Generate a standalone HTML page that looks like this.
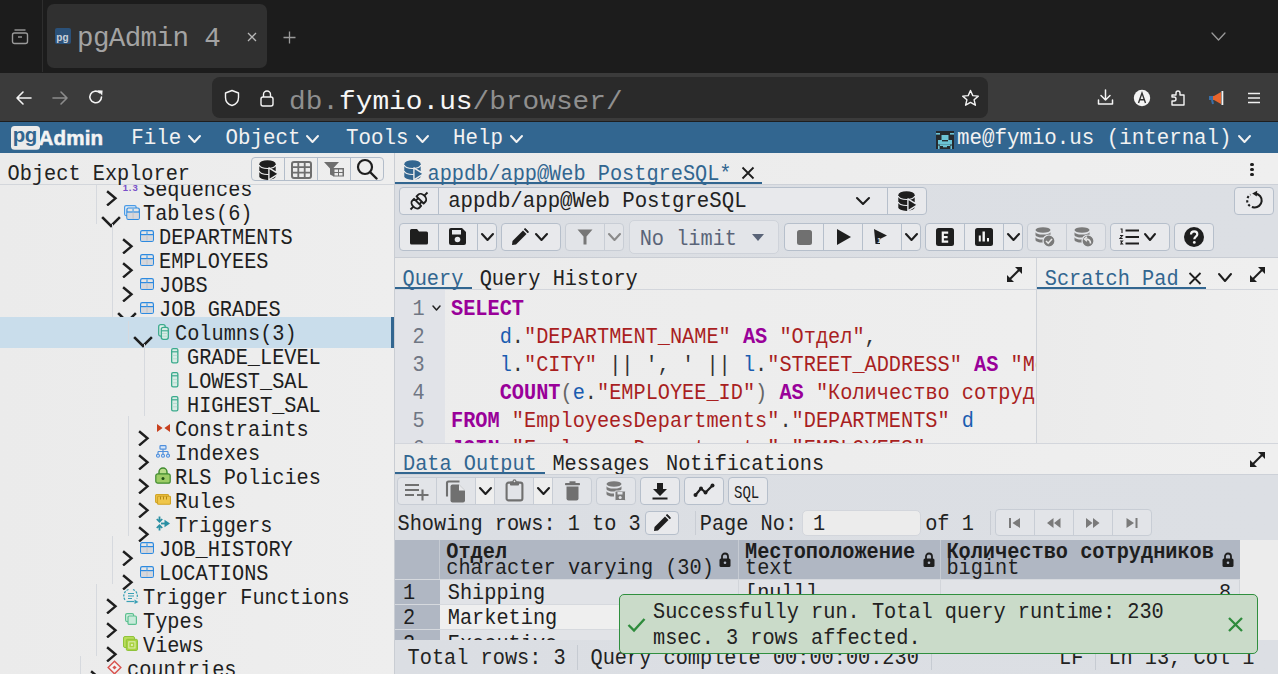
<!DOCTYPE html>
<html><head><meta charset="utf-8"><style>
html,body{margin:0;padding:0;width:1278px;height:674px;overflow:hidden;background:#ececec}
body{position:relative}
div{position:absolute}
.t{white-space:pre}
</style></head><body>
<div style="left:0px;top:0px;width:1278px;height:73px;background:#1c1c1c"></div>
<div style="left:42px;top:0px;width:1px;height:72px;background:#2e2e2e"></div>
<div style="left:47px;top:4px;width:220px;height:64px;background:#303030;border-radius:7px"></div>
<svg style="position:absolute;left:11px;top:27px;" width="18" height="18" viewBox="0 0 18 18"><rect x="1.5" y="6" width="15" height="10.5" rx="2" fill="none" stroke="#9a9a9a" stroke-width="1.4"/><path d="M3.5 3 H14.5" stroke="#9a9a9a" stroke-width="1.4"/><path d="M7 10 H11" stroke="#9a9a9a" stroke-width="1.4"/></svg>
<div style="left:55px;top:28px;width:16px;height:16px;background:#2b5179;border-radius:2px"></div>
<div class="t" style="left:56.30px;top:32.64px;font-size:10px;line-height:10px;color:#c9d2dc;font-weight:bold;font-family:'Liberation Sans', sans-serif;">pg</div>
<div class="t" style="left:77.00px;top:25.23px;font-size:27.5px;line-height:27.5px;color:#a3a3a3;font-family:'Liberation Mono', monospace;letter-spacing:-0.6px">pgAdmin 4</div>
<svg style="position:absolute;left:247px;top:31.5px;" width="10" height="10" viewBox="0 0 10 10"><path d="M1 1 L9 9 M9 1 L1 9" stroke="#b8b8b8" stroke-width="1.3"/></svg>
<svg style="position:absolute;left:283px;top:31px;" width="13" height="13" viewBox="0 0 13 13"><path d="M6.5 0.5 V12.5 M0.5 6.5 H12.5" stroke="#9a9a9a" stroke-width="1.3"/></svg>
<svg style="position:absolute;left:1209.5px;top:31.0px;" width="17" height="11" viewBox="0 0 17 11"><path d="M2 2 L8.5 9 L15 2" fill="none" stroke="#9a9a9a" stroke-width="1.3" stroke-linecap="round" stroke-linejoin="round"/></svg>
<div style="left:0px;top:73px;width:1278px;height:49px;background:#3b3b3b"></div>
<div style="left:0px;top:121px;width:1278px;height:1px;background:#1e1e1e"></div>
<svg style="position:absolute;left:15px;top:89px;" width="18" height="18" viewBox="0 0 18 18"><path d="M2 9 H16 M8 3 L2 9 L8 15" fill="none" stroke="#f4f4f4" stroke-width="1.6" stroke-linejoin="round" stroke-linecap="round"/></svg>
<svg style="position:absolute;left:51px;top:89px;" width="18" height="18" viewBox="0 0 18 18"><path d="M2 9 H16 M10 3 L16 9 L10 15" fill="none" stroke="#8c8c8c" stroke-width="1.6" stroke-linejoin="round" stroke-linecap="round"/></svg>
<svg style="position:absolute;left:87px;top:88px;" width="18" height="18" viewBox="0 0 18 18"><path d="M14.5 9 A5.8 5.8 0 1 1 12.6 4.6" fill="none" stroke="#f4f4f4" stroke-width="1.6" stroke-linecap="round"/><path d="M10.5 2.2 L15.6 2.4 L15.2 7.5 Z" fill="#f4f4f4"/></svg>
<div style="left:212px;top:77px;width:776px;height:41px;background:#2a2a2a;border-radius:8px"></div>
<svg style="position:absolute;left:223px;top:89px;" width="18" height="18" viewBox="0 0 18 18"><path d="M9 1.5 L15.5 4 V8.5 C15.5 12.5 12.5 15.5 9 16.5 C5.5 15.5 2.5 12.5 2.5 8.5 V4 Z" fill="none" stroke="#f4f4f4" stroke-width="1.4" stroke-linejoin="round"/></svg>
<svg style="position:absolute;left:259px;top:89px;" width="16" height="18" viewBox="0 0 16 18"><rect x="2" y="8" width="12" height="9" rx="2" fill="none" stroke="#f4f4f4" stroke-width="1.4"/><path d="M4.5 8 V5.5 A3.5 3.5 0 0 1 11.5 5.5 V8" fill="none" stroke="#f4f4f4" stroke-width="1.4"/></svg>
<div class="t" style="left:289.00px;top:87.80px;font-size:27.8px;line-height:27.8px;color:#f6f6f6;font-family:'Liberation Mono', monospace;transform:scaleY(0.9);transform-origin:0 21.30px;"><span style="color:#8f8f8f">db.</span>fymio.us<span style="color:#8f8f8f">/browser/</span></div>
<svg style="position:absolute;left:961px;top:89px;" width="19" height="18" viewBox="0 0 19 18"><path d="M9.5 1.5 L11.8 6.6 L17.3 7.1 L13.1 10.8 L14.4 16.2 L9.5 13.4 L4.6 16.2 L5.9 10.8 L1.7 7.1 L7.2 6.6 Z" fill="none" stroke="#f4f4f4" stroke-width="1.4" stroke-linejoin="round"/></svg>
<svg style="position:absolute;left:1097px;top:88px;" width="17" height="18" viewBox="0 0 17 18"><path d="M8.5 2 V12 M4 7.5 L8.5 12 L13 7.5 M1.5 12 V16 H15.5 V12" fill="none" stroke="#f4f4f4" stroke-width="1.5" stroke-linejoin="round" stroke-linecap="round"/></svg>
<svg style="position:absolute;left:1133px;top:89px;" width="18" height="18" viewBox="0 0 18 18"><circle cx="9" cy="9" r="8.2" fill="#f4f4f4"/><path d="M5.5 14 L9 4 L12.5 14 M6.6 10.8 H11.4" fill="none" stroke="#333" stroke-width="1.4"/></svg>
<svg style="position:absolute;left:1170px;top:89px;" width="17" height="18" viewBox="0 0 17 18"><path d="M2 6 H6 V4 A2 2 0 0 1 10 4 V6 H14 V16 H2 V12 H4 A2 2 0 0 0 4 8 H2 Z" fill="none" stroke="#f4f4f4" stroke-width="1.4" stroke-linejoin="round"/></svg>
<svg style="position:absolute;left:1207px;top:89px;" width="18" height="18" viewBox="0 0 18 18"><path d="M3 7 H7 L14 3 V15 L7 11 H3 Z" fill="#e8642c"/><rect x="14.5" y="2" width="1.8" height="14" fill="#f4f4f4"/><rect x="2" y="7" width="4" height="4" fill="#3a6ea5"/><path d="M5 11 L6 15" stroke="#3a6ea5" stroke-width="2"/></svg>
<svg style="position:absolute;left:1247px;top:92px;" width="14" height="12" viewBox="0 0 14 12"><path d="M1 1.5 H13 M1 6 H13 M1 10.5 H13" stroke="#f0f0f0" stroke-width="1.4"/></svg>
<div style="left:0px;top:122px;width:1278px;height:31px;background:#326690"></div>
<svg style="position:absolute;left:10px;top:125px;" width="100" height="27" viewBox="0 0 100 27"><rect x="1" y="1" width="29" height="23.7" rx="3.5" fill="#ebebeb"/><text x="2.8" y="16.6" font-family="Liberation Sans" font-weight="bold" font-size="20.4" fill="#326690" letter-spacing="-0.4">pg</text><text x="28.5" y="19.5" font-family="Liberation Sans" font-weight="bold" font-size="20.6" fill="#f4f4f4" stroke="#f4f4f4" stroke-width="0.5" letter-spacing="0.15">Admin</text></svg>
<div class="t" style="left:131.20px;top:129.37px;font-size:20.8px;line-height:20.8px;color:#f2f2f2;font-family:'Liberation Mono', monospace;transform:scaleY(1.02);transform-origin:0 15.93px;">File</div>
<svg style="position:absolute;left:186.5px;top:134.0px;" width="15" height="10" viewBox="0 0 15 10"><path d="M2 2 L7.5 8 L13 2" fill="none" stroke="#f2f2f2" stroke-width="2" stroke-linecap="round" stroke-linejoin="round"/></svg>
<div class="t" style="left:225.60px;top:129.37px;font-size:20.8px;line-height:20.8px;color:#f2f2f2;font-family:'Liberation Mono', monospace;transform:scaleY(1.02);transform-origin:0 15.93px;">Object</div>
<svg style="position:absolute;left:304.5px;top:134.0px;" width="15" height="10" viewBox="0 0 15 10"><path d="M2 2 L7.5 8 L13 2" fill="none" stroke="#f2f2f2" stroke-width="2" stroke-linecap="round" stroke-linejoin="round"/></svg>
<div class="t" style="left:346.00px;top:129.37px;font-size:20.8px;line-height:20.8px;color:#f2f2f2;font-family:'Liberation Mono', monospace;transform:scaleY(1.02);transform-origin:0 15.93px;">Tools</div>
<svg style="position:absolute;left:414.5px;top:134.0px;" width="15" height="10" viewBox="0 0 15 10"><path d="M2 2 L7.5 8 L13 2" fill="none" stroke="#f2f2f2" stroke-width="2" stroke-linecap="round" stroke-linejoin="round"/></svg>
<div class="t" style="left:453.00px;top:129.37px;font-size:20.8px;line-height:20.8px;color:#f2f2f2;font-family:'Liberation Mono', monospace;transform:scaleY(1.02);transform-origin:0 15.93px;">Help</div>
<svg style="position:absolute;left:509.0px;top:134.0px;" width="15" height="10" viewBox="0 0 15 10"><path d="M2 2 L7.5 8 L13 2" fill="none" stroke="#f2f2f2" stroke-width="2" stroke-linecap="round" stroke-linejoin="round"/></svg>
<svg style="position:absolute;left:936px;top:131px;" width="18" height="18" viewBox="0 0 18 18"><rect width="18" height="18" fill="#262a2e"/><rect x="0" y="2" width="4" height="1.6" fill="#6cc3d5"/><rect x="14" y="2" width="4" height="1.6" fill="#6cc3d5"/><rect x="5.5" y="4" width="7" height="5.5" fill="#6cc3d5"/><rect x="2" y="9" width="14" height="4.5" fill="#6cc3d5"/><rect x="6" y="9" width="6" height="1.4" fill="#262a2e"/><rect x="4" y="13.5" width="10" height="1.5" fill="#6cc3d5"/><rect x="7" y="15" width="4" height="1.3" fill="#6cc3d5"/><rect x="2" y="14.5" width="1.6" height="3.5" fill="#6cc3d5"/><rect x="14.4" y="14.5" width="1.6" height="3.5" fill="#6cc3d5"/></svg>
<div class="t" style="left:957.00px;top:129.37px;font-size:20.8px;line-height:20.8px;color:#f2f2f2;font-family:'Liberation Mono', monospace;transform:scaleY(1.02);transform-origin:0 15.93px;">me@fymio.us (internal)</div>
<svg style="position:absolute;left:1237.0px;top:134.0px;" width="15" height="10" viewBox="0 0 15 10"><path d="M2 2 L7.5 8 L13 2" fill="none" stroke="#f2f2f2" stroke-width="2" stroke-linecap="round" stroke-linejoin="round"/></svg>
<div style="left:0px;top:153px;width:394px;height:521px;background:linear-gradient(90deg,#ebebeb,#eeeeee)"></div>
<div style="left:0px;top:184px;width:394px;height:1px;background:#d3d6db"></div>
<div class="t" style="left:7.60px;top:164.96px;font-size:20.28px;line-height:20.28px;color:#222;font-family:'Liberation Mono', monospace;transform:scaleY(1.05);transform-origin:0 15.54px;">Object Explorer</div>
<div style="left:251px;top:157px;width:133px;height:24px;border:1px solid #b3bdca;border-radius:4px;box-sizing:border-box"></div>
<div style="left:284px;top:157px;width:1px;height:24px;background:#b3bdca"></div>
<div style="left:317px;top:157px;width:1px;height:24px;background:#b3bdca"></div>
<div style="left:350px;top:157px;width:1px;height:24px;background:#b3bdca"></div>
<svg style="position:absolute;left:258.5px;top:159.5px;" width="20" height="21" viewBox="-0.3 -0.3 20 21"><ellipse cx="8.2" cy="3.6" rx="8.2" ry="3.6" fill="#1e1e1e"/><path d="M0 4 V16 A8.2 3.6 0 0 0 16.4 16 V4 Z" fill="#1e1e1e"/><path d="M0 4.6 A8.2 3.6 0 0 0 16.4 4.6 M0 10.6 A8.2 3.6 0 0 0 16.4 10.6" fill="none" stroke="#ececec" stroke-width="1.2"/><path d="M9.6 7.6 L19.2 13.6 L9.6 19.6 Z" fill="#1e1e1e" stroke="#ececec" stroke-width="1.4" stroke-linejoin="round"/></svg>
<svg style="position:absolute;left:290.5px;top:160.5px;" width="21" height="18" viewBox="0 0 21 18"><rect x="1" y="1" width="19" height="16" rx="2" fill="#ececec" stroke="#6e6e6e" stroke-width="2"/><path d="M1 6.2 H20 M1 11.6 H20 M7.3 1 V17 M13.7 1 V17" stroke="#6e6e6e" stroke-width="1.8"/></svg>
<svg style="position:absolute;left:323px;top:161px;" width="22" height="16" viewBox="0 0 22 16"><path d="M1 1 H16 L10 7.5 V15 L7 13.5 V7.5 Z" fill="#6e6e6e"/><rect x="10" y="7" width="11" height="8.5" fill="#6e6e6e"/><rect x="11.5" y="8.5" width="3.5" height="2.5" fill="#ececec"/><rect x="16" y="8.5" width="3.5" height="2.5" fill="#ececec"/><rect x="11.5" y="12" width="3.5" height="2.5" fill="#ececec"/><rect x="16" y="12" width="3.5" height="2.5" fill="#ececec"/></svg>
<svg style="position:absolute;left:356px;top:158px;" width="22" height="22" viewBox="0 0 22 22"><circle cx="9" cy="9" r="7" fill="none" stroke="#1e1e1e" stroke-width="2.2"/><path d="M14 14 L20.5 20.5" stroke="#1e1e1e" stroke-width="2.4" stroke-linecap="round"/></svg>
<div style="left:0;top:185px;width:394px;height:489px;overflow:hidden">
<div style="left:96px;top:-9px;width:1px;height:24px;background:#d6d9de"></div>
<div class="t" style="left:122.70px;top:-1.98px;font-size:9.5px;line-height:9.5px;color:#7a4fc8;font-weight:bold;font-family:'Liberation Sans', sans-serif;letter-spacing:0.9px">1.3</div>
<div class="t" style="left:143.00px;top:-4.04px;font-size:20.28px;line-height:20.28px;color:#1e1e1e;font-family:'Liberation Mono', monospace;transform:scaleY(1.05);transform-origin:0 15.54px;">Sequences</div>
<svg style="position:absolute;left:106px;top:4.5px;" width="11.5" height="16.7" viewBox="0 0 11.5 16.7"><path d="M2 2 L9.5 8.35 L2 14.7" fill="none" stroke="#1e1e1e" stroke-width="2.4" stroke-linecap="square" stroke-linejoin="miter"/></svg>
<div style="left:96px;top:15px;width:1px;height:24px;background:#d6d9de"></div>
<svg style="position:absolute;left:123.5px;top:19.5px;" width="16" height="15" viewBox="0 0 16 15"><rect x="0.6" y="0.6" width="11.5" height="10" rx="1.5" fill="#e6eef6" stroke="#4a9be6" stroke-width="1.2"/><rect x="2.9" y="3" width="12.4" height="11.4" rx="1.4" fill="#e6e6e6" stroke="#2d8ae0" stroke-width="1.2"/><rect x="3.5" y="7.4" width="11.2" height="6.4" fill="#d6d7db"/><path d="M2.9 7 H15.3" stroke="#2d8ae0" stroke-width="1.2"/><path d="M9.1 3.6 V6.6" stroke="#6aaee8" stroke-width="1.5"/><path d="M9.1 7.6 V13.8" stroke="#c4c6cc" stroke-width="1.2"/></svg>
<div class="t" style="left:143.00px;top:19.96px;font-size:20.28px;line-height:20.28px;color:#1e1e1e;font-family:'Liberation Mono', monospace;transform:scaleY(1.05);transform-origin:0 15.54px;">Tables(6)</div>
<svg style="position:absolute;left:101px;top:30.5px;" width="20" height="12.0" viewBox="0 0 20 12.0"><path d="M2 2 L10.0 10.0 L18 2" fill="none" stroke="#1e1e1e" stroke-width="2.5" stroke-linecap="square" stroke-linejoin="miter"/></svg>
<div style="left:112px;top:39px;width:1px;height:24px;background:#d6d9de"></div>
<svg style="position:absolute;left:140px;top:44.5px;" width="14" height="12" viewBox="0 0 14 12"><rect x="0.6" y="0.6" width="12.8" height="10.8" rx="1.6" fill="#e6e6e6" stroke="#2d8ae0" stroke-width="1.2"/><rect x="1.2" y="5" width="11.6" height="5.8" fill="#d6d7db"/><path d="M0.6 4.6 H13.4" stroke="#2d8ae0" stroke-width="1.2"/><path d="M7 1.2 V4.2" stroke="#6aaee8" stroke-width="1.6"/><path d="M7 5.2 V10.8" stroke="#c4c6cc" stroke-width="1.2"/></svg>
<div class="t" style="left:159.00px;top:43.96px;font-size:20.28px;line-height:20.28px;color:#1e1e1e;font-family:'Liberation Mono', monospace;transform:scaleY(1.05);transform-origin:0 15.54px;">DEPARTMENTS</div>
<svg style="position:absolute;left:122px;top:52.5px;" width="11.5" height="16.700000000000003" viewBox="0 0 11.5 16.700000000000003"><path d="M2 2 L9.5 8.350000000000001 L2 14.700000000000003" fill="none" stroke="#1e1e1e" stroke-width="2.4" stroke-linecap="square" stroke-linejoin="miter"/></svg>
<div style="left:112px;top:63px;width:1px;height:24px;background:#d6d9de"></div>
<svg style="position:absolute;left:140px;top:68.5px;" width="14" height="12" viewBox="0 0 14 12"><rect x="0.6" y="0.6" width="12.8" height="10.8" rx="1.6" fill="#e6e6e6" stroke="#2d8ae0" stroke-width="1.2"/><rect x="1.2" y="5" width="11.6" height="5.8" fill="#d6d7db"/><path d="M0.6 4.6 H13.4" stroke="#2d8ae0" stroke-width="1.2"/><path d="M7 1.2 V4.2" stroke="#6aaee8" stroke-width="1.6"/><path d="M7 5.2 V10.8" stroke="#c4c6cc" stroke-width="1.2"/></svg>
<div class="t" style="left:159.00px;top:67.96px;font-size:20.28px;line-height:20.28px;color:#1e1e1e;font-family:'Liberation Mono', monospace;transform:scaleY(1.05);transform-origin:0 15.54px;">EMPLOYEES</div>
<svg style="position:absolute;left:122px;top:76.5px;" width="11.5" height="16.700000000000003" viewBox="0 0 11.5 16.700000000000003"><path d="M2 2 L9.5 8.350000000000001 L2 14.700000000000003" fill="none" stroke="#1e1e1e" stroke-width="2.4" stroke-linecap="square" stroke-linejoin="miter"/></svg>
<div style="left:112px;top:87px;width:1px;height:24px;background:#d6d9de"></div>
<svg style="position:absolute;left:140px;top:92.5px;" width="14" height="12" viewBox="0 0 14 12"><rect x="0.6" y="0.6" width="12.8" height="10.8" rx="1.6" fill="#e6e6e6" stroke="#2d8ae0" stroke-width="1.2"/><rect x="1.2" y="5" width="11.6" height="5.8" fill="#d6d7db"/><path d="M0.6 4.6 H13.4" stroke="#2d8ae0" stroke-width="1.2"/><path d="M7 1.2 V4.2" stroke="#6aaee8" stroke-width="1.6"/><path d="M7 5.2 V10.8" stroke="#c4c6cc" stroke-width="1.2"/></svg>
<div class="t" style="left:159.00px;top:91.96px;font-size:20.28px;line-height:20.28px;color:#1e1e1e;font-family:'Liberation Mono', monospace;transform:scaleY(1.05);transform-origin:0 15.54px;">JOBS</div>
<svg style="position:absolute;left:122px;top:100.5px;" width="11.5" height="16.700000000000003" viewBox="0 0 11.5 16.700000000000003"><path d="M2 2 L9.5 8.350000000000001 L2 14.700000000000003" fill="none" stroke="#1e1e1e" stroke-width="2.4" stroke-linecap="square" stroke-linejoin="miter"/></svg>
<div style="left:112px;top:111px;width:1px;height:24px;background:#d6d9de"></div>
<svg style="position:absolute;left:140px;top:116.5px;" width="14" height="12" viewBox="0 0 14 12"><rect x="0.6" y="0.6" width="12.8" height="10.8" rx="1.6" fill="#e6e6e6" stroke="#2d8ae0" stroke-width="1.2"/><rect x="1.2" y="5" width="11.6" height="5.8" fill="#d6d7db"/><path d="M0.6 4.6 H13.4" stroke="#2d8ae0" stroke-width="1.2"/><path d="M7 1.2 V4.2" stroke="#6aaee8" stroke-width="1.6"/><path d="M7 5.2 V10.8" stroke="#c4c6cc" stroke-width="1.2"/></svg>
<div class="t" style="left:159.00px;top:115.96px;font-size:20.28px;line-height:20.28px;color:#1e1e1e;font-family:'Liberation Mono', monospace;transform:scaleY(1.05);transform-origin:0 15.54px;">JOB_GRADES</div>
<svg style="position:absolute;left:117px;top:126.5px;" width="20" height="12.0" viewBox="0 0 20 12.0"><path d="M2 2 L10.0 10.0 L18 2" fill="none" stroke="#1e1e1e" stroke-width="2.5" stroke-linecap="square" stroke-linejoin="miter"/></svg>
<div style="left:0px;top:132px;width:394px;height:31px;background:#c9ddeb"></div>
<div style="left:391px;top:132px;width:3px;height:31px;background:#326690"></div>
<div style="left:128px;top:136px;width:1px;height:22.5px;background:#d6d9de"></div>
<svg style="position:absolute;left:157.5px;top:138.5px;" width="11" height="16" viewBox="0 0 11 16"><rect x="0.7" y="0.7" width="6.5" height="11.5" rx="2" fill="#e3f0ec" stroke="#3aaa8c" stroke-width="1.3"/><rect x="3.3" y="3.3" width="7" height="12" rx="2" fill="#d8ebe5" stroke="#3aaa8c" stroke-width="1.3"/><path d="M3.3 6.8 H10.3" stroke="#3aaa8c" stroke-width="1.1"/><path d="M4 9.5 H9.6 M4 12.2 H9.6" stroke="#b5dccf" stroke-width="1"/></svg>
<div class="t" style="left:175.00px;top:139.96px;font-size:20.28px;line-height:20.28px;color:#1e1e1e;font-family:'Liberation Mono', monospace;transform:scaleY(1.05);transform-origin:0 15.54px;">Columns(3)</div>
<svg style="position:absolute;left:133px;top:150.5px;" width="20" height="12.0" viewBox="0 0 20 12.0"><path d="M2 2 L10.0 10.0 L18 2" fill="none" stroke="#1e1e1e" stroke-width="2.5" stroke-linecap="square" stroke-linejoin="miter"/></svg>
<div style="left:144px;top:159px;width:1px;height:24px;background:#d6d9de"></div>
<svg style="position:absolute;left:171.4px;top:162.8px;" width="8" height="16" viewBox="0 0 8 16"><rect x="0.65" y="0.65" width="6.2" height="14.2" rx="1.4" fill="#d9ece6" stroke="#3aaa8c" stroke-width="1.3"/><path d="M0.7 3.8 H6.8" stroke="#3aaa8c" stroke-width="1.2"/><path d="M1.4 7.4 H6.2 M1.4 10.8 H6.2" stroke="#b5dccf" stroke-width="1"/></svg>
<div class="t" style="left:187.00px;top:163.96px;font-size:20.28px;line-height:20.28px;color:#1e1e1e;font-family:'Liberation Mono', monospace;transform:scaleY(1.05);transform-origin:0 15.54px;">GRADE_LEVEL</div>
<div style="left:144px;top:183px;width:1px;height:24px;background:#d6d9de"></div>
<svg style="position:absolute;left:171.4px;top:186.8px;" width="8" height="16" viewBox="0 0 8 16"><rect x="0.65" y="0.65" width="6.2" height="14.2" rx="1.4" fill="#d9ece6" stroke="#3aaa8c" stroke-width="1.3"/><path d="M0.7 3.8 H6.8" stroke="#3aaa8c" stroke-width="1.2"/><path d="M1.4 7.4 H6.2 M1.4 10.8 H6.2" stroke="#b5dccf" stroke-width="1"/></svg>
<div class="t" style="left:187.00px;top:187.96px;font-size:20.28px;line-height:20.28px;color:#1e1e1e;font-family:'Liberation Mono', monospace;transform:scaleY(1.05);transform-origin:0 15.54px;">LOWEST_SAL</div>
<div style="left:144px;top:207px;width:1px;height:24px;background:#d6d9de"></div>
<svg style="position:absolute;left:171.4px;top:210.8px;" width="8" height="16" viewBox="0 0 8 16"><rect x="0.65" y="0.65" width="6.2" height="14.2" rx="1.4" fill="#d9ece6" stroke="#3aaa8c" stroke-width="1.3"/><path d="M0.7 3.8 H6.8" stroke="#3aaa8c" stroke-width="1.2"/><path d="M1.4 7.4 H6.2 M1.4 10.8 H6.2" stroke="#b5dccf" stroke-width="1"/></svg>
<div class="t" style="left:187.00px;top:211.96px;font-size:20.28px;line-height:20.28px;color:#1e1e1e;font-family:'Liberation Mono', monospace;transform:scaleY(1.05);transform-origin:0 15.54px;">HIGHEST_SAL</div>
<div style="left:128px;top:231px;width:1px;height:24px;background:#d6d9de"></div>
<svg style="position:absolute;left:156.5px;top:238.7px;" width="13" height="8" viewBox="0 0 13 8"><path d="M0 0 L5.6 4 L0 8 Z M13 0 L7.4 4 L13 8 Z" fill="#c8401e"/></svg>
<div class="t" style="left:175.00px;top:235.96px;font-size:20.28px;line-height:20.28px;color:#1e1e1e;font-family:'Liberation Mono', monospace;transform:scaleY(1.05);transform-origin:0 15.54px;">Constraints</div>
<svg style="position:absolute;left:138px;top:244.5px;" width="11.5" height="16.69999999999999" viewBox="0 0 11.5 16.69999999999999"><path d="M2 2 L9.5 8.349999999999994 L2 14.699999999999989" fill="none" stroke="#1e1e1e" stroke-width="2.4" stroke-linecap="square" stroke-linejoin="miter"/></svg>
<div style="left:128px;top:255px;width:1px;height:24px;background:#d6d9de"></div>
<svg style="position:absolute;left:156px;top:260px;" width="14" height="13" viewBox="0 0 14 13"><rect x="4" y="0.6" width="6" height="3.6" rx="0.8" fill="#dce9f8" stroke="#4f8fdc" stroke-width="1.2"/><path d="M7 4.2 V6.5 M2 6.5 H12 M2 6.5 V9 M7 6.5 V9 M12 6.5 V9" stroke="#4f8fdc" stroke-width="1.2" fill="none"/><circle cx="2" cy="10.7" r="1.5" fill="#dce9f8" stroke="#4f8fdc" stroke-width="1.1"/><circle cx="7" cy="10.7" r="1.5" fill="#dce9f8" stroke="#4f8fdc" stroke-width="1.1"/><circle cx="12" cy="10.7" r="1.5" fill="#dce9f8" stroke="#4f8fdc" stroke-width="1.1"/></svg>
<div class="t" style="left:175.00px;top:259.96px;font-size:20.28px;line-height:20.28px;color:#1e1e1e;font-family:'Liberation Mono', monospace;transform:scaleY(1.05);transform-origin:0 15.54px;">Indexes</div>
<svg style="position:absolute;left:138px;top:268.5px;" width="11.5" height="16.69999999999999" viewBox="0 0 11.5 16.69999999999999"><path d="M2 2 L9.5 8.349999999999994 L2 14.699999999999989" fill="none" stroke="#1e1e1e" stroke-width="2.4" stroke-linecap="square" stroke-linejoin="miter"/></svg>
<div style="left:128px;top:279px;width:1px;height:24px;background:#d6d9de"></div>
<svg style="position:absolute;left:155px;top:282.2px;" width="16" height="17" viewBox="0 0 16 17"><path d="M4 7 V5 A4 4 0 0 1 12 5 V7" fill="#b9dd8a" stroke="#3f8a2e" stroke-width="1.4"/><rect x="0.8" y="6.8" width="14.4" height="9.4" rx="2" fill="#9ccc65" stroke="#3f8a2e" stroke-width="1.2"/><circle cx="8" cy="11.5" r="1.5" fill="#1f4f14"/></svg>
<div class="t" style="left:175.00px;top:283.96px;font-size:20.28px;line-height:20.28px;color:#1e1e1e;font-family:'Liberation Mono', monospace;transform:scaleY(1.05);transform-origin:0 15.54px;">RLS Policies</div>
<svg style="position:absolute;left:138px;top:292.5px;" width="11.5" height="16.69999999999999" viewBox="0 0 11.5 16.69999999999999"><path d="M2 2 L9.5 8.349999999999994 L2 14.699999999999989" fill="none" stroke="#1e1e1e" stroke-width="2.4" stroke-linecap="square" stroke-linejoin="miter"/></svg>
<div style="left:128px;top:303px;width:1px;height:24px;background:#d6d9de"></div>
<svg style="position:absolute;left:155px;top:309px;" width="16" height="11" viewBox="0 0 16 11"><rect x="0.6" y="0.6" width="13" height="8" rx="1" fill="#efc64a" stroke="#d1a425" stroke-width="1.1"/><rect x="2.5" y="2.3" width="13" height="8" rx="1" fill="#efc64a" stroke="#d1a425" stroke-width="1.1"/><path d="M5.5 2.5 V5.5 M8.5 2.5 V5.5 M11.5 2.5 V5.5" stroke="#b38712" stroke-width="1"/></svg>
<div class="t" style="left:175.00px;top:307.96px;font-size:20.28px;line-height:20.28px;color:#1e1e1e;font-family:'Liberation Mono', monospace;transform:scaleY(1.05);transform-origin:0 15.54px;">Rules</div>
<svg style="position:absolute;left:138px;top:316.5px;" width="11.5" height="16.69999999999999" viewBox="0 0 11.5 16.69999999999999"><path d="M2 2 L9.5 8.349999999999994 L2 14.699999999999989" fill="none" stroke="#1e1e1e" stroke-width="2.4" stroke-linecap="square" stroke-linejoin="miter"/></svg>
<div style="left:128px;top:327px;width:1px;height:24px;background:#d6d9de"></div>
<svg style="position:absolute;left:155px;top:331.3px;" width="16" height="15" viewBox="0 0 16 15"><path d="M4.5 0.5 V5.5 M1.8 3 L4.5 5.8 L7.2 3" fill="none" stroke="#2a8fa3" stroke-width="1.8"/><path d="M4.5 14.5 V9.5 M1.8 12 L4.5 9.2 L7.2 12" fill="none" stroke="#2a8fa3" stroke-width="1.8"/><path d="M6 7.5 H10" stroke="#2a8fa3" stroke-width="1.8"/><path d="M9.5 3.8 L15 7.5 L9.5 11.2 Z" fill="#2a8fa3"/></svg>
<div class="t" style="left:175.00px;top:331.96px;font-size:20.28px;line-height:20.28px;color:#1e1e1e;font-family:'Liberation Mono', monospace;transform:scaleY(1.05);transform-origin:0 15.54px;">Triggers</div>
<svg style="position:absolute;left:138px;top:340.5px;" width="11.5" height="16.69999999999999" viewBox="0 0 11.5 16.69999999999999"><path d="M2 2 L9.5 8.349999999999994 L2 14.699999999999989" fill="none" stroke="#1e1e1e" stroke-width="2.4" stroke-linecap="square" stroke-linejoin="miter"/></svg>
<div style="left:112px;top:351px;width:1px;height:24px;background:#d6d9de"></div>
<svg style="position:absolute;left:140px;top:356.5px;" width="14" height="12" viewBox="0 0 14 12"><rect x="0.6" y="0.6" width="12.8" height="10.8" rx="1.6" fill="#e6e6e6" stroke="#2d8ae0" stroke-width="1.2"/><rect x="1.2" y="5" width="11.6" height="5.8" fill="#d6d7db"/><path d="M0.6 4.6 H13.4" stroke="#2d8ae0" stroke-width="1.2"/><path d="M7 1.2 V4.2" stroke="#6aaee8" stroke-width="1.6"/><path d="M7 5.2 V10.8" stroke="#c4c6cc" stroke-width="1.2"/></svg>
<div class="t" style="left:159.00px;top:355.96px;font-size:20.28px;line-height:20.28px;color:#1e1e1e;font-family:'Liberation Mono', monospace;transform:scaleY(1.05);transform-origin:0 15.54px;">JOB_HISTORY</div>
<svg style="position:absolute;left:122px;top:364.5px;" width="11.5" height="16.69999999999999" viewBox="0 0 11.5 16.69999999999999"><path d="M2 2 L9.5 8.349999999999994 L2 14.699999999999989" fill="none" stroke="#1e1e1e" stroke-width="2.4" stroke-linecap="square" stroke-linejoin="miter"/></svg>
<div style="left:112px;top:375px;width:1px;height:24px;background:#d6d9de"></div>
<svg style="position:absolute;left:140px;top:380.5px;" width="14" height="12" viewBox="0 0 14 12"><rect x="0.6" y="0.6" width="12.8" height="10.8" rx="1.6" fill="#e6e6e6" stroke="#2d8ae0" stroke-width="1.2"/><rect x="1.2" y="5" width="11.6" height="5.8" fill="#d6d7db"/><path d="M0.6 4.6 H13.4" stroke="#2d8ae0" stroke-width="1.2"/><path d="M7 1.2 V4.2" stroke="#6aaee8" stroke-width="1.6"/><path d="M7 5.2 V10.8" stroke="#c4c6cc" stroke-width="1.2"/></svg>
<div class="t" style="left:159.00px;top:379.96px;font-size:20.28px;line-height:20.28px;color:#1e1e1e;font-family:'Liberation Mono', monospace;transform:scaleY(1.05);transform-origin:0 15.54px;">LOCATIONS</div>
<svg style="position:absolute;left:122px;top:388.5px;" width="11.5" height="16.69999999999999" viewBox="0 0 11.5 16.69999999999999"><path d="M2 2 L9.5 8.349999999999994 L2 14.699999999999989" fill="none" stroke="#1e1e1e" stroke-width="2.4" stroke-linecap="square" stroke-linejoin="miter"/></svg>
<div style="left:96px;top:399px;width:1px;height:24px;background:#d6d9de"></div>
<svg style="position:absolute;left:123px;top:402.5px;" width="16" height="16" viewBox="0 0 16 16"><path d="M5.5 1.5 A6.8 6.8 0 0 0 2.5 12.5" fill="none" stroke="#3aa0b5" stroke-width="1.3" stroke-dasharray="2.2 1.2"/><path d="M10 1.5 A6.8 6.8 0 0 1 13.8 10.5" fill="none" stroke="#3aa0b5" stroke-width="1.3" stroke-dasharray="2.2 1.2"/><path d="M5 5.5 H11 M5 8 H11 M5 10.5 H9" stroke="#3aa0b5" stroke-width="1.2"/><path d="M3.5 13.5 H11" stroke="#3aa0b5" stroke-width="1.2"/><path d="M11.5 11.5 L15.5 14 L11.5 16Z" fill="#3aa0b5"/></svg>
<div class="t" style="left:143.00px;top:403.96px;font-size:20.28px;line-height:20.28px;color:#1e1e1e;font-family:'Liberation Mono', monospace;transform:scaleY(1.05);transform-origin:0 15.54px;">Trigger Functions</div>
<svg style="position:absolute;left:106px;top:412.5px;" width="11.5" height="16.69999999999999" viewBox="0 0 11.5 16.69999999999999"><path d="M2 2 L9.5 8.349999999999994 L2 14.699999999999989" fill="none" stroke="#1e1e1e" stroke-width="2.4" stroke-linecap="square" stroke-linejoin="miter"/></svg>
<div style="left:96px;top:423px;width:1px;height:24px;background:#d6d9de"></div>
<svg style="position:absolute;left:124.5px;top:428px;" width="12" height="12" viewBox="0 0 12 12"><rect x="0.6" y="0.6" width="8" height="8" rx="1.5" fill="#d7efe2" stroke="#5cc090" stroke-width="1.2"/><rect x="3" y="3" width="8.4" height="8.4" rx="1.2" fill="#c8eada" stroke="#5cc090" stroke-width="1.2"/></svg>
<div class="t" style="left:143.00px;top:427.96px;font-size:20.28px;line-height:20.28px;color:#1e1e1e;font-family:'Liberation Mono', monospace;transform:scaleY(1.05);transform-origin:0 15.54px;">Types</div>
<svg style="position:absolute;left:106px;top:436.5px;" width="11.5" height="16.69999999999999" viewBox="0 0 11.5 16.69999999999999"><path d="M2 2 L9.5 8.349999999999994 L2 14.699999999999989" fill="none" stroke="#1e1e1e" stroke-width="2.4" stroke-linecap="square" stroke-linejoin="miter"/></svg>
<div style="left:96px;top:447px;width:1px;height:24px;background:#d6d9de"></div>
<svg style="position:absolute;left:123px;top:451px;" width="15" height="15" viewBox="0 0 15 15"><rect x="0.5" y="0.5" width="11" height="11" rx="1.5" fill="#b9dd5a" stroke="#8fc33a" stroke-width="1"/><rect x="3.3" y="3.3" width="11.2" height="11.2" rx="1.3" fill="#a9d23e" stroke="#8fc33a" stroke-width="1"/><rect x="5.8" y="5.8" width="6.2" height="6.2" fill="none" stroke="#e0f0b8" stroke-width="1"/><rect x="7.9" y="7.9" width="2" height="2" fill="#e0f0b8"/></svg>
<div class="t" style="left:143.00px;top:451.96px;font-size:20.28px;line-height:20.28px;color:#1e1e1e;font-family:'Liberation Mono', monospace;transform:scaleY(1.05);transform-origin:0 15.54px;">Views</div>
<svg style="position:absolute;left:106px;top:460.5px;" width="11.5" height="16.69999999999999" viewBox="0 0 11.5 16.69999999999999"><path d="M2 2 L9.5 8.349999999999994 L2 14.699999999999989" fill="none" stroke="#1e1e1e" stroke-width="2.4" stroke-linecap="square" stroke-linejoin="miter"/></svg>
<div style="left:80px;top:471px;width:1px;height:24px;background:#d6d9de"></div>
<svg style="position:absolute;left:107px;top:474.5px;" width="15" height="15" viewBox="0 0 15 15"><rect x="3" y="3" width="9" height="9" transform="rotate(45 7.5 7.5)" fill="#f4f4f4" stroke="#d9534f" stroke-width="1.4"/><rect x="6" y="6" width="3" height="3" transform="rotate(45 7.5 7.5)" fill="#d9534f"/></svg>
<div class="t" style="left:127.00px;top:475.96px;font-size:20.28px;line-height:20.28px;color:#1e1e1e;font-family:'Liberation Mono', monospace;transform:scaleY(1.05);transform-origin:0 15.54px;">countries</div>
<svg style="position:absolute;left:90px;top:484.5px;" width="11.5" height="16.69999999999999" viewBox="0 0 11.5 16.69999999999999"><path d="M2 2 L9.5 8.349999999999994 L2 14.699999999999989" fill="none" stroke="#1e1e1e" stroke-width="2.4" stroke-linecap="square" stroke-linejoin="miter"/></svg>
</div>
<div style="left:394px;top:153px;width:1px;height:521px;background:#c9cdd3"></div>
<div style="left:395px;top:153px;width:883px;height:31px;background:linear-gradient(90deg,#ebebeb,#efefef)"></div>
<div style="left:395px;top:184px;width:883px;height:1px;background:#cdd1d8"></div>
<svg style="position:absolute;left:403.5px;top:160px;" width="20" height="21" viewBox="-0.3 -0.3 20 21"><ellipse cx="8.2" cy="3.6" rx="8.2" ry="3.6" fill="#326690"/><path d="M0 4 V16 A8.2 3.6 0 0 0 16.4 16 V4 Z" fill="#326690"/><path d="M0 4.6 A8.2 3.6 0 0 0 16.4 4.6 M0 10.6 A8.2 3.6 0 0 0 16.4 10.6" fill="none" stroke="#ececec" stroke-width="1.2"/><path d="M9.6 7.6 L19.2 13.6 L9.6 19.6 Z" fill="#326690" stroke="#ececec" stroke-width="1.4" stroke-linejoin="round"/></svg>
<div class="t" style="left:427.50px;top:164.96px;font-size:20.28px;line-height:20.28px;color:#326690;font-family:'Liberation Mono', monospace;transform:scaleY(1.05);transform-origin:0 15.54px;">appdb/app@Web PostgreSQL*</div>
<svg style="position:absolute;left:741px;top:166px;" width="14" height="14" viewBox="0 0 14 14"><path d="M1.5 1.5 L12.5 12.5 M12.5 1.5 L1.5 12.5" stroke="#1e1e1e" stroke-width="1.8"/></svg>
<div style="left:395px;top:182px;width:367px;height:2px;background:#326690"></div>
<div style="left:1250px;top:162.75px;width:3.5px;height:3.5px;background:#1e1e1e;border-radius:50%"></div>
<div style="left:1250px;top:167.75px;width:3.5px;height:3.5px;background:#1e1e1e;border-radius:50%"></div>
<div style="left:1250px;top:172.75px;width:3.5px;height:3.5px;background:#1e1e1e;border-radius:50%"></div>
<div style="left:395px;top:185px;width:883px;height:73px;background:linear-gradient(90deg,#dbdee3,#dcdfe4)"></div>
<div style="left:395px;top:257px;width:883px;height:1px;background:#c9cdd4"></div>
<div style="left:399px;top:187px;width:528px;height:28px;background:#e8e9ec;border:1px solid #b6bfcb;border-radius:4px;box-sizing:border-box"></div>
<div style="left:438px;top:187px;width:1px;height:28px;background:#b6bfcb"></div>
<div style="left:887px;top:187px;width:1px;height:28px;background:#b6bfcb"></div>
<svg style="position:absolute;left:408px;top:190px;" width="22" height="22" viewBox="0 0 22 22"><g transform="rotate(-45 11 11)" fill="none" stroke="#1e1e1e" stroke-width="1.9" stroke-linejoin="round"><path d="M-1 11 H3.5"/><path d="M9 6 H6.5 A3.5 5 0 0 0 6.5 16 H9 Z"/><path d="M9 8.5 H12.5 M9 13.5 H12.5"/><path d="M12.5 6 H15 A3.5 5 0 0 1 15 16 H12.5 Z"/><path d="M18.5 11 H23"/></g><path d="M9 5 L7 3" stroke="#1e1e1e" stroke-width="0"/></svg>
<div class="t" style="left:448.20px;top:192.43px;font-size:20.72px;line-height:20.72px;color:#222;font-family:'Liberation Mono', monospace;transform:scaleY(1.03);transform-origin:0 15.87px;">appdb/app@Web PostgreSQL</div>
<svg style="position:absolute;left:854.5px;top:196.0px;" width="16" height="10" viewBox="0 0 16 10"><path d="M2 2 L8.0 8 L14 2" fill="none" stroke="#1e1e1e" stroke-width="2.1" stroke-linecap="round" stroke-linejoin="round"/></svg>
<svg style="position:absolute;left:897.5px;top:191px;" width="20" height="21" viewBox="-0.3 -0.3 20 21"><ellipse cx="8.2" cy="3.6" rx="8.2" ry="3.6" fill="#1e1e1e"/><path d="M0 4 V16 A8.2 3.6 0 0 0 16.4 16 V4 Z" fill="#1e1e1e"/><path d="M0 4.6 A8.2 3.6 0 0 0 16.4 4.6 M0 10.6 A8.2 3.6 0 0 0 16.4 10.6" fill="none" stroke="#e7e9ed" stroke-width="1.2"/><path d="M9.6 7.6 L19.2 13.6 L9.6 19.6 Z" fill="#1e1e1e" stroke="#e7e9ed" stroke-width="1.4" stroke-linejoin="round"/></svg>
<div style="left:1234px;top:187px;width:40px;height:28px;background:#e8e9ec;border:1px solid #b6bfcb;border-radius:4px;box-sizing:border-box"></div>
<svg style="position:absolute;left:1244px;top:190px;" width="20" height="21" viewBox="0 0 20 21"><path d="M11.5 3.6 A6.9 6.9 0 0 1 10 17.4" fill="none" stroke="#1e1e1e" stroke-width="2.1"/><path d="M10 17.4 A6.9 6.9 0 0 1 6.5 4.6" fill="none" stroke="#1e1e1e" stroke-width="2.1" stroke-dasharray="2.2 2.1"/><path d="M13.2 0.8 L8.2 3.6 L12.8 6.6 Z" fill="#1e1e1e"/></svg>
<div style="left:399px;top:223px;width:98px;height:28px;background:#e8e9ec;border:1px solid #b6bfcb;border-radius:4px;box-sizing:border-box"></div>
<div style="left:438px;top:223px;width:1px;height:28px;background:#b6bfcb"></div>
<div style="left:477px;top:223px;width:1px;height:28px;background:#b6bfcb"></div>
<svg style="position:absolute;left:409px;top:228px;" width="20" height="17" viewBox="0 0 20 17"><path d="M1 2.5 A1.5 1.5 0 0 1 2.5 1 H8 L10 3.5 H17.5 A1.5 1.5 0 0 1 19 5 V15 A1.5 1.5 0 0 1 17.5 16.5 H2.5 A1.5 1.5 0 0 1 1 15 Z" fill="#1e1e1e"/></svg>
<svg style="position:absolute;left:448px;top:227px;" width="19" height="19" viewBox="0 0 19 19"><path d="M1 3 A2 2 0 0 1 3 1 H14 L18 5 V16 A2 2 0 0 1 16 18 H3 A2 2 0 0 1 1 16 Z" fill="#1e1e1e"/><rect x="4" y="3" width="9" height="4.5" fill="#e7e9ed"/><circle cx="9.5" cy="12.5" r="2.8" fill="#e7e9ed"/></svg>
<svg style="position:absolute;left:479.5px;top:232.0px;" width="15" height="10" viewBox="0 0 15 10"><path d="M2 2 L7.5 8 L13 2" fill="none" stroke="#1e1e1e" stroke-width="2.1" stroke-linecap="round" stroke-linejoin="round"/></svg>
<div style="left:501px;top:223px;width:60px;height:28px;background:#e8e9ec;border:1px solid #b6bfcb;border-radius:4px;box-sizing:border-box"></div>
<svg style="position:absolute;left:511px;top:228px;" width="18" height="18" viewBox="0 0 18 18"><path d="M1 17 L1.5 13 L12 2.5 L15.5 6 L5 16.5 Z" fill="#1e1e1e"/><path d="M13 1.5 L14.2 0.5 L17.5 3.8 L16.5 5" fill="#1e1e1e" stroke="#1e1e1e" stroke-width="1"/></svg>
<svg style="position:absolute;left:534.0px;top:232.0px;" width="15" height="10" viewBox="0 0 15 10"><path d="M2 2 L7.5 8 L13 2" fill="none" stroke="#1e1e1e" stroke-width="2.1" stroke-linecap="round" stroke-linejoin="round"/></svg>
<div style="left:565px;top:223px;width:59px;height:28px;background:#e2e4e8;border:1px solid #c8cdd5;border-radius:4px;box-sizing:border-box"></div>
<div style="left:604px;top:223px;width:1px;height:28px;background:#c8cdd5"></div>
<svg style="position:absolute;left:577px;top:229px;" width="16" height="16" viewBox="0 0 16 16"><path d="M0.5 0.5 H15.5 L9.5 7.5 V15.5 H6.5 V7.5 Z" fill="#777"/></svg>
<svg style="position:absolute;left:606.5px;top:232.0px;" width="15" height="10" viewBox="0 0 15 10"><path d="M2 2 L7.5 8 L13 2" fill="none" stroke="#8a8a8a" stroke-width="2.1" stroke-linecap="round" stroke-linejoin="round"/></svg>
<div style="left:628.5px;top:219.5px;width:150.5px;height:34.5px;background:#e3e5e9;border:1px solid #cfd3da;border-radius:5px;box-sizing:border-box"></div>
<div class="t" style="left:639.70px;top:229.56px;font-size:20.28px;line-height:20.28px;color:#5a6478;font-family:'Liberation Mono', monospace;transform:scaleY(1.05);transform-origin:0 15.54px;">No limit</div>
<svg style="position:absolute;left:752px;top:234px;" width="12" height="7" viewBox="0 0 12 7"><path d="M0 0 H12 L6 7 Z" fill="#5a6478"/></svg>
<div style="left:784px;top:223px;width:137px;height:28px;background:#e8e9ec;border:1px solid #b6bfcb;border-radius:4px;box-sizing:border-box"></div>
<div style="left:823px;top:223px;width:1px;height:28px;background:#b6bfcb"></div>
<div style="left:862px;top:223px;width:1px;height:28px;background:#b6bfcb"></div>
<div style="left:901px;top:223px;width:1px;height:28px;background:#b6bfcb"></div>
<div style="left:796.5px;top:229.5px;width:15.0px;height:15.0px;background:#707070;border-radius:2.5px"></div>
<svg style="position:absolute;left:836px;top:228px;" width="16" height="18" viewBox="0 0 16 18"><path d="M1 1 L15 9 L1 17 Z" fill="#1e1e1e"/></svg>
<svg style="position:absolute;left:873px;top:228px;" width="17" height="17" viewBox="0 0 17 17"><path d="M1 1 L14 7.5 L7 11 V16 H2.5 Z" fill="#1e1e1e"/><path d="M7 11 L3.5 16" stroke="#1e1e1e"/><text x="4.2" y="14.5" font-family="Liberation Sans" font-weight="bold" font-size="7" fill="#e7e9ed">1</text></svg>
<svg style="position:absolute;left:903.5px;top:232.0px;" width="15" height="10" viewBox="0 0 15 10"><path d="M2 2 L7.5 8 L13 2" fill="none" stroke="#1e1e1e" stroke-width="2.1" stroke-linecap="round" stroke-linejoin="round"/></svg>
<div style="left:925px;top:223px;width:98px;height:28px;background:#e8e9ec;border:1px solid #b6bfcb;border-radius:4px;box-sizing:border-box"></div>
<div style="left:964px;top:223px;width:1px;height:28px;background:#b6bfcb"></div>
<div style="left:1003px;top:223px;width:1px;height:28px;background:#b6bfcb"></div>
<div style="left:936px;top:228px;width:18px;height:18px;background:#1e1e1e;border-radius:2.5px"></div>
<svg style="position:absolute;left:936px;top:228px;" width="18" height="18" viewBox="0 0 18 18"><path d="M12.2 4.6 H6.8 V13.6 H12.2 M6.8 9.1 H11.6" fill="none" stroke="#f4f4f4" stroke-width="2.2"/></svg>
<div style="left:975px;top:228px;width:18px;height:18px;background:#1e1e1e;border-radius:2.5px"></div>
<svg style="position:absolute;left:975px;top:228px;" width="18" height="18" viewBox="0 0 18 18"><rect x="3.8" y="7.5" width="2" height="6" fill="#f4f4f4"/><rect x="7.5" y="3.5" width="2.4" height="10" fill="#f4f4f4"/><rect x="12" y="10" width="2" height="3.5" fill="#f4f4f4"/></svg>
<svg style="position:absolute;left:1005.5px;top:232.0px;" width="15" height="10" viewBox="0 0 15 10"><path d="M2 2 L7.5 8 L13 2" fill="none" stroke="#1e1e1e" stroke-width="2.1" stroke-linecap="round" stroke-linejoin="round"/></svg>
<div style="left:1027px;top:223px;width:79px;height:28px;background:#e2e4e8;border:1px solid #c8cdd5;border-radius:4px;box-sizing:border-box"></div>
<div style="left:1066px;top:223px;width:1px;height:28px;background:#c8cdd5"></div>
<svg style="position:absolute;left:1035px;top:227px;" width="21" height="21" viewBox="0 0 21 21"><ellipse cx="8" cy="3" rx="7.5" ry="2.8" fill="#7a7a7a"/><path d="M0.5 5 V8 C0.5 9.5 4 10.6 8 10.6 C12 10.6 15.5 9.5 15.5 8 V5 C15.5 6.5 12 7.6 8 7.6 C4 7.6 0.5 6.5 0.5 5Z" fill="#7a7a7a"/><path d="M0.5 10 V13 C0.5 14.5 4 15.6 8 15.6 V12.6 C4 12.6 0.5 11.5 0.5 10Z" fill="#7a7a7a"/><circle cx="14" cy="14" r="6" fill="#7a7a7a" stroke="#e2e4e8" stroke-width="1.2"/><path d="M11 14 L13.2 16.2 L17 12" fill="none" stroke="#e8e8e8" stroke-width="1.6"/></svg>
<svg style="position:absolute;left:1074px;top:227px;" width="21" height="21" viewBox="0 0 21 21"><ellipse cx="8" cy="3" rx="7.5" ry="2.8" fill="#7a7a7a"/><path d="M0.5 5 V8 C0.5 9.5 4 10.6 8 10.6 C12 10.6 15.5 9.5 15.5 8 V5 C15.5 6.5 12 7.6 8 7.6 C4 7.6 0.5 6.5 0.5 5Z" fill="#7a7a7a"/><path d="M0.5 10 V13 C0.5 14.5 4 15.6 8 15.6 V12.6 C4 12.6 0.5 11.5 0.5 10Z" fill="#7a7a7a"/><circle cx="14" cy="14" r="6" fill="#7a7a7a" stroke="#e2e4e8" stroke-width="1.2"/><path d="M16.5 16.5 C16.5 13 14.5 12 11.5 12" fill="none" stroke="#e8e8e8" stroke-width="1.6"/><path d="M13 9.8 L10.5 12 L13 14.2" fill="none" stroke="#e8e8e8" stroke-width="1.5"/></svg>
<div style="left:1110px;top:223px;width:60px;height:28px;background:#e8e9ec;border:1px solid #b6bfcb;border-radius:4px;box-sizing:border-box"></div>
<svg style="position:absolute;left:1119px;top:228px;" width="22" height="18" viewBox="0 0 22 18"><path d="M1.5 1 H3 V5" fill="none" stroke="#1e1e1e" stroke-width="1.1"/><path d="M1 7.5 H3.5 L1 10.5 H3.7" fill="none" stroke="#1e1e1e" stroke-width="1.1"/><path d="M1 13 H3.5 L2.2 14.5 L3.5 16 H1" fill="none" stroke="#1e1e1e" stroke-width="1.1"/><path d="M6.5 2.5 H20 M6.5 9 H20 M6.5 15.5 H20" stroke="#1e1e1e" stroke-width="2.2"/></svg>
<svg style="position:absolute;left:1143.0px;top:232.0px;" width="14" height="10" viewBox="0 0 14 10"><path d="M2 2 L7.0 8 L12 2" fill="none" stroke="#1e1e1e" stroke-width="2" stroke-linecap="round" stroke-linejoin="round"/></svg>
<div style="left:1174px;top:223px;width:40px;height:28px;background:#e8e9ec;border:1px solid #b6bfcb;border-radius:4px;box-sizing:border-box"></div>
<svg style="position:absolute;left:1184px;top:227px;" width="20" height="20" viewBox="0 0 20 20"><circle cx="10" cy="10" r="10" fill="#1e1e1e"/><path d="M7 7.6 C7 5.6 8.4 4.4 10.2 4.4 C12 4.4 13.3 5.6 13.3 7.3 C13.3 9.6 10.3 9.8 10.3 12.2" fill="none" stroke="#f4f4f4" stroke-width="2.2"/><circle cx="10.3" cy="15.4" r="1.4" fill="#f4f4f4"/></svg>
<div style="left:395px;top:258px;width:883px;height:31px;background:linear-gradient(90deg,#ebebeb,#efefef)"></div>
<div style="left:395px;top:289px;width:883px;height:1px;background:#d3d6dc"></div>
<div class="t" style="left:402.50px;top:269.66px;font-size:20.28px;line-height:20.28px;color:#326690;font-family:'Liberation Mono', monospace;transform:scaleY(1.05);transform-origin:0 15.54px;">Query</div>
<div style="left:395px;top:287px;width:77px;height:2px;background:#326690"></div>
<div class="t" style="left:479.70px;top:269.66px;font-size:20.28px;line-height:20.28px;color:#222;font-family:'Liberation Mono', monospace;transform:scaleY(1.05);transform-origin:0 15.54px;">Query History</div>
<svg style="position:absolute;left:1006px;top:265.5px;" width="17" height="17" viewBox="0 0 17 17"><path d="M2 15 L15 2" stroke="#1e1e1e" stroke-width="2"/><path d="M9 1 H16 V8 Z" fill="#1e1e1e"/><path d="M1 9 V16 H8 Z" fill="#1e1e1e"/></svg>
<div style="left:1036px;top:258px;width:1px;height:185px;background:#cfd3d9"></div>
<div class="t" style="left:1044.80px;top:269.76px;font-size:20.28px;line-height:20.28px;color:#326690;font-family:'Liberation Mono', monospace;transform:scaleY(1.05);transform-origin:0 15.54px;">Scratch Pad</div>
<svg style="position:absolute;left:1188px;top:272px;" width="14" height="13" viewBox="0 0 14 13"><path d="M1.5 1 L12.5 12 M12.5 1 L1.5 12" stroke="#1e1e1e" stroke-width="1.8"/></svg>
<div style="left:1037px;top:287px;width:169px;height:2px;background:#326690"></div>
<svg style="position:absolute;left:1216.5px;top:272.0px;" width="16" height="11" viewBox="0 0 16 11"><path d="M2 2 L8.0 9 L14 2" fill="none" stroke="#1e1e1e" stroke-width="2" stroke-linecap="round" stroke-linejoin="round"/></svg>
<svg style="position:absolute;left:1248.5px;top:265.5px;" width="17" height="17" viewBox="0 0 17 17"><path d="M2 15 L15 2" stroke="#1e1e1e" stroke-width="2"/><path d="M9 1 H16 V8 Z" fill="#1e1e1e"/><path d="M1 9 V16 H8 Z" fill="#1e1e1e"/></svg>
<div style="left:395px;top:290px;width:641px;height:153px;background:linear-gradient(90deg,#ececec,#eeeeee)"></div>
<div style="left:1037px;top:290px;width:241px;height:153px;background:linear-gradient(90deg,#ebebeb,#efefef)"></div>
<div style="left:395px;top:290px;width:50px;height:153px;background:#e1e3e8"></div>
<div style="left:395px;top:443px;width:883px;height:1px;background:#d3d6dc"></div>
<div style="left:395px;top:290px;width:641px;height:153px;overflow:hidden">
<div class="t" style="left:56.00px;top:9.66px;font-size:20.28px;line-height:20.28px;color:#333333;font-family:'Liberation Mono', monospace;transform:scaleY(1.05);transform-origin:0 15.54px;"><span style="color:#990099;font-weight:bold">SELECT</span></div>
<div class="t" style="left:17.50px;top:9.66px;font-size:20.28px;line-height:20.28px;color:#6f7683;font-family:'Liberation Mono', monospace;transform:scaleY(1.05);transform-origin:0 15.54px;">1</div>
<div class="t" style="left:56.00px;top:37.66px;font-size:20.28px;line-height:20.28px;color:#333333;font-family:'Liberation Mono', monospace;transform:scaleY(1.05);transform-origin:0 15.54px;">    <span style="color:#1a5cb0">d</span>.<span style="color:#a91f1f">"DEPARTMENT_NAME"</span> <span style="color:#990099;font-weight:bold">AS</span> <span style="color:#a91f1f">"Отдел"</span>,</div>
<div class="t" style="left:17.50px;top:37.66px;font-size:20.28px;line-height:20.28px;color:#6f7683;font-family:'Liberation Mono', monospace;transform:scaleY(1.05);transform-origin:0 15.54px;">2</div>
<div class="t" style="left:56.00px;top:65.66px;font-size:20.28px;line-height:20.28px;color:#333333;font-family:'Liberation Mono', monospace;transform:scaleY(1.05);transform-origin:0 15.54px;">    <span style="color:#1a5cb0">l</span>.<span style="color:#a91f1f">"CITY"</span> || ', ' || <span style="color:#1a5cb0">l</span>.<span style="color:#a91f1f">"STREET_ADDRESS"</span> <span style="color:#990099;font-weight:bold">AS</span> <span style="color:#a91f1f">"Местоположение"</span>,</div>
<div class="t" style="left:17.50px;top:65.66px;font-size:20.28px;line-height:20.28px;color:#6f7683;font-family:'Liberation Mono', monospace;transform:scaleY(1.05);transform-origin:0 15.54px;">3</div>
<div class="t" style="left:56.00px;top:93.66px;font-size:20.28px;line-height:20.28px;color:#333333;font-family:'Liberation Mono', monospace;transform:scaleY(1.05);transform-origin:0 15.54px;">    <span style="color:#990099;font-weight:bold">COUNT</span><span style="color:#666">(</span><span style="color:#1a5cb0">e</span>.<span style="color:#a91f1f">"EMPLOYEE_ID"</span><span style="color:#666">)</span> <span style="color:#990099;font-weight:bold">AS</span> <span style="color:#a91f1f">"Количество сотрудников"</span></div>
<div class="t" style="left:17.50px;top:93.66px;font-size:20.28px;line-height:20.28px;color:#6f7683;font-family:'Liberation Mono', monospace;transform:scaleY(1.05);transform-origin:0 15.54px;">4</div>
<div class="t" style="left:56.00px;top:121.66px;font-size:20.28px;line-height:20.28px;color:#333333;font-family:'Liberation Mono', monospace;transform:scaleY(1.05);transform-origin:0 15.54px;"><span style="color:#990099;font-weight:bold">FROM</span> <span style="color:#a91f1f">"EmployeesDepartments"</span>.<span style="color:#a91f1f">"DEPARTMENTS"</span> <span style="color:#1a5cb0">d</span></div>
<div class="t" style="left:17.50px;top:121.66px;font-size:20.28px;line-height:20.28px;color:#6f7683;font-family:'Liberation Mono', monospace;transform:scaleY(1.05);transform-origin:0 15.54px;">5</div>
<div class="t" style="left:56.00px;top:149.66px;font-size:20.28px;line-height:20.28px;color:#333333;font-family:'Liberation Mono', monospace;transform:scaleY(1.05);transform-origin:0 15.54px;"><span style="color:#990099;font-weight:bold">JOIN</span> <span style="color:#a91f1f">"EmployeesDepartments"</span>.<span style="color:#a91f1f">"EMPLOYEES"</span> <span style="color:#1a5cb0">e</span></div>
<div class="t" style="left:17.50px;top:149.66px;font-size:20.28px;line-height:20.28px;color:#6f7683;font-family:'Liberation Mono', monospace;transform:scaleY(1.05);transform-origin:0 15.54px;">6</div>
<svg style="position:absolute;left:36.0px;top:14.0px;" width="11" height="8" viewBox="0 0 11 8"><path d="M2 2 L5.5 6 L9 2" fill="none" stroke="#222" stroke-width="1.5" stroke-linecap="round" stroke-linejoin="round"/></svg>
</div>
<div style="left:395px;top:444px;width:883px;height:30px;background:linear-gradient(90deg,#ebebeb,#efefef)"></div>
<div class="t" style="left:403.00px;top:454.66px;font-size:20.28px;line-height:20.28px;color:#326690;font-family:'Liberation Mono', monospace;transform:scaleY(1.05);transform-origin:0 15.54px;">Data Output</div>
<div style="left:395px;top:472px;width:150px;height:2px;background:#326690"></div>
<div class="t" style="left:552.40px;top:454.66px;font-size:20.28px;line-height:20.28px;color:#222;font-family:'Liberation Mono', monospace;transform:scaleY(1.05);transform-origin:0 15.54px;">Messages</div>
<div class="t" style="left:666.00px;top:454.66px;font-size:20.28px;line-height:20.28px;color:#222;font-family:'Liberation Mono', monospace;transform:scaleY(1.05);transform-origin:0 15.54px;">Notifications</div>
<svg style="position:absolute;left:1248.5px;top:450.5px;" width="17" height="17" viewBox="0 0 17 17"><path d="M2 15 L15 2" stroke="#1e1e1e" stroke-width="2"/><path d="M9 1 H16 V8 Z" fill="#1e1e1e"/><path d="M1 9 V16 H8 Z" fill="#1e1e1e"/></svg>
<div style="left:395px;top:474px;width:883px;height:66px;background:linear-gradient(90deg,#dbdee3,#dcdfe4)"></div>
<div style="left:395px;top:474px;width:883px;height:1px;background:#cdd1d8"></div>
<div style="left:397px;top:477px;width:195px;height:28px;background:#e2e4e8;border:1px solid #c8cdd5;border-radius:4px;box-sizing:border-box"></div>
<div style="left:436px;top:477px;width:1px;height:28px;background:#c8cdd5"></div>
<div style="left:475px;top:477px;width:1px;height:28px;background:#c8cdd5"></div>
<div style="left:494px;top:477px;width:1px;height:28px;background:#c8cdd5"></div>
<div style="left:533px;top:477px;width:1px;height:28px;background:#c8cdd5"></div>
<div style="left:552px;top:477px;width:1px;height:28px;background:#c8cdd5"></div>
<svg style="position:absolute;left:404px;top:483px;" width="26" height="18" viewBox="0 0 26 18"><path d="M1 2 H15 M1 7 H15 M1 12 H10" stroke="#707070" stroke-width="2.1"/><path d="M18.5 6.5 V17.5 M13 12 H24.5" stroke="#707070" stroke-width="2.1"/></svg>
<svg style="position:absolute;left:445px;top:479.5px;" width="21" height="23" viewBox="0 0 21 23"><path d="M2 16.5 V3 A1.5 1.5 0 0 1 3.5 1.5 H14.5" fill="none" stroke="#707070" stroke-width="2.1"/><path d="M5.5 6.5 A2 2 0 0 1 7.5 4.5 H14 L20 10.5 V20.5 A2 2 0 0 1 18 22.5 H7.5 A2 2 0 0 1 5.5 20.5 Z" fill="#707070"/><path d="M14 4.5 V10.5 H20 Z" fill="#e8e9ec"/></svg>
<div style="left:476px;top:478px;width:18px;height:26px;background:#eeeeee"></div>
<div style="left:534px;top:478px;width:18px;height:26px;background:#eeeeee"></div>
<svg style="position:absolute;left:477.5px;top:486.0px;" width="15" height="10" viewBox="0 0 15 10"><path d="M2 2 L7.5 8 L13 2" fill="none" stroke="#1e1e1e" stroke-width="2.1" stroke-linecap="round" stroke-linejoin="round"/></svg>
<svg style="position:absolute;left:504.5px;top:479px;" width="20" height="23" viewBox="0 0 20 23"><rect x="1.6" y="3.6" width="15.8" height="17.8" rx="2" fill="none" stroke="#707070" stroke-width="2.1"/><rect x="5" y="2.5" width="9" height="4" rx="0.8" fill="#707070"/><circle cx="9.5" cy="2.3" r="2" fill="#707070"/><circle cx="9.5" cy="2.4" r="0.8" fill="#e8e9ec"/></svg>
<svg style="position:absolute;left:535.5px;top:486.0px;" width="15" height="10" viewBox="0 0 15 10"><path d="M2 2 L7.5 8 L13 2" fill="none" stroke="#1e1e1e" stroke-width="2.1" stroke-linecap="round" stroke-linejoin="round"/></svg>
<svg style="position:absolute;left:565px;top:481px;" width="15" height="20" viewBox="0 0 15 20"><rect x="0" y="2" width="15" height="2.2" rx="0.8" fill="#707070"/><rect x="4.5" y="0.3" width="6" height="2.2" fill="#707070"/><path d="M1.5 5.5 H13.5 V17.5 A2 2 0 0 1 11.5 19.5 H3.5 A2 2 0 0 1 1.5 17.5 Z" fill="#707070"/></svg>
<div style="left:596px;top:477px;width:40px;height:28px;background:#e2e4e8;border:1px solid #c8cdd5;border-radius:4px;box-sizing:border-box"></div>
<svg style="position:absolute;left:606px;top:481px;" width="20" height="20" viewBox="0 0 20 20"><ellipse cx="8" cy="3" rx="7.5" ry="2.8" fill="#7a7a7a"/><path d="M0.5 5 V8 C0.5 9.5 4 10.6 8 10.6 C12 10.6 15.5 9.5 15.5 8 V5 C15.5 6.5 12 7.6 8 7.6 C4 7.6 0.5 6.5 0.5 5Z" fill="#7a7a7a"/><path d="M0.5 10 V13 C0.5 14.5 4 15.6 8 15.6 V12.6 C4 12.6 0.5 11.5 0.5 10Z" fill="#7a7a7a"/><rect x="9" y="10" width="10.5" height="9.5" rx="1" fill="#7a7a7a" stroke="#e2e4e8" stroke-width="1"/><rect x="11.5" y="11" width="5" height="2.5" fill="#e2e4e8"/><circle cx="14.2" cy="16.5" r="1.5" fill="#e2e4e8"/></svg>
<div style="left:640px;top:477px;width:40px;height:28px;background:#e8e9ec;border:1px solid #b6bfcb;border-radius:4px;box-sizing:border-box"></div>
<svg style="position:absolute;left:651px;top:482px;" width="18" height="18" viewBox="0 0 18 18"><path d="M6 1 H12 V7 H16 L9 14 L2 7 H6 Z" fill="#1e1e1e"/><rect x="1.5" y="15.5" width="15" height="2" fill="#1e1e1e"/></svg>
<div style="left:684px;top:477px;width:40px;height:28px;background:#e8e9ec;border:1px solid #b6bfcb;border-radius:4px;box-sizing:border-box"></div>
<svg style="position:absolute;left:693px;top:483px;" width="22" height="15" viewBox="0 0 22 15"><path d="M2.5 12 L8 5.5 L12.5 9.5 L19.5 2.5" fill="none" stroke="#1e1e1e" stroke-width="2.2" stroke-linejoin="round"/><circle cx="2.5" cy="12" r="2" fill="#1e1e1e"/><circle cx="8" cy="5.5" r="2" fill="#1e1e1e"/><circle cx="12.5" cy="9.5" r="2" fill="#1e1e1e"/><circle cx="19.5" cy="2.5" r="2" fill="#1e1e1e"/></svg>
<div style="left:728px;top:477px;width:40px;height:28px;background:#e8e9ec;border:1px solid #b6bfcb;border-radius:4px;box-sizing:border-box"></div>
<div class="t" style="left:733.50px;top:484.83px;font-size:18.5px;line-height:18.5px;color:#1e1e1e;font-family:'Liberation Mono', monospace;transform:scaleX(0.76);transform-origin:0 0">SQL</div>
<div class="t" style="left:397.50px;top:515.16px;font-size:20.28px;line-height:20.28px;color:#222;font-family:'Liberation Mono', monospace;transform:scaleY(1.05);transform-origin:0 15.54px;">Showing rows: 1 to 3</div>
<div style="left:645px;top:511px;width:34px;height:24px;background:#e8e9ec;border:1px solid #b6bfcb;border-radius:4px;box-sizing:border-box"></div>
<svg style="position:absolute;left:653px;top:514px;" width="18" height="18" viewBox="0 0 18 18"><path d="M1 17 L1.5 13 L12 2.5 L15.5 6 L5 16.5 Z" fill="#1e1e1e"/><path d="M13 1.5 L14.2 0.5 L17.5 3.8 L16.5 5" fill="#1e1e1e" stroke="#1e1e1e" stroke-width="1"/></svg>
<div style="left:695px;top:511px;width:1px;height:24px;background:#c9cdd4"></div>
<div class="t" style="left:699.80px;top:515.16px;font-size:20.28px;line-height:20.28px;color:#222;font-family:'Liberation Mono', monospace;transform:scaleY(1.05);transform-origin:0 15.54px;">Page No:</div>
<div style="left:802px;top:509.5px;width:118.5px;height:26.5px;background:#ececec;border:1px solid #d3d6dc;border-radius:5px;box-sizing:border-box"></div>
<div class="t" style="left:813.00px;top:515.16px;font-size:20.28px;line-height:20.28px;color:#222;font-family:'Liberation Mono', monospace;transform:scaleY(1.05);transform-origin:0 15.54px;">1</div>
<div class="t" style="left:925.20px;top:515.16px;font-size:20.28px;line-height:20.28px;color:#222;font-family:'Liberation Mono', monospace;transform:scaleY(1.05);transform-origin:0 15.54px;">of 1</div>
<div style="left:990px;top:511px;width:1px;height:24px;background:#c9cdd4"></div>
<div style="left:995px;top:509px;width:157px;height:27px;background:#e2e4e8;border:1px solid #c8cdd5;border-radius:4px;box-sizing:border-box"></div>
<div style="left:1034px;top:509px;width:1px;height:27px;background:#c8cdd5"></div>
<div style="left:1073px;top:509px;width:1px;height:27px;background:#c8cdd5"></div>
<div style="left:1112px;top:509px;width:1px;height:27px;background:#c8cdd5"></div>
<svg style="position:absolute;left:1008px;top:516px;" width="14" height="14" viewBox="0 0 14 14"><rect x="1" y="2" width="2" height="10" fill="#7a7a7a"/><path d="M12 2 L4.5 7 L12 12 Z" fill="#7a7a7a"/></svg>
<svg style="position:absolute;left:1046px;top:516px;" width="16" height="14" viewBox="0 0 16 14"><path d="M7.5 2 L1 7 L7.5 12 Z M14.5 2 L8 7 L14.5 12 Z" fill="#7a7a7a"/></svg>
<svg style="position:absolute;left:1085px;top:516px;" width="16" height="14" viewBox="0 0 16 14"><path d="M1 2 L7.5 7 L1 12 Z M8 2 L14.5 7 L8 12 Z" fill="#7a7a7a"/></svg>
<svg style="position:absolute;left:1125px;top:516px;" width="14" height="14" viewBox="0 0 14 14"><path d="M1.5 2 L9 7 L1.5 12 Z" fill="#7a7a7a"/><rect x="10.5" y="2" width="2" height="10" fill="#7a7a7a"/></svg>
<div style="left:395px;top:540px;width:883px;height:100px;background:#ececec"></div>
<div style="left:395px;top:540px;width:844.5px;height:39px;background:#b0b7c3"></div>
<div style="left:395px;top:579px;width:44.5px;height:61px;background:#b0b7c3"></div>
<div style="left:439.5px;top:579px;width:800.0px;height:25px;background:#e1e3e7"></div>
<div style="left:439.5px;top:604px;width:800.0px;height:25.5px;background:#efefef"></div>
<div style="left:439.5px;top:629.5px;width:800.0px;height:10.5px;background:#e1e3e7"></div>
<div style="left:439px;top:540px;width:1px;height:39px;background:#c6cbd3"></div>
<div style="left:738px;top:540px;width:1px;height:39px;background:#c6cbd3"></div>
<div style="left:940px;top:540px;width:1px;height:39px;background:#c6cbd3"></div>
<div style="left:738px;top:579px;width:1px;height:61px;background:#d2d5da"></div>
<div style="left:940px;top:579px;width:1px;height:61px;background:#d2d5da"></div>
<div style="left:1239px;top:579px;width:1px;height:61px;background:#d2d5da"></div>
<div style="left:395px;top:579px;width:845px;height:1px;background:#d6d9de"></div>
<div style="left:395px;top:604px;width:845px;height:1px;background:#d6d9de"></div>
<div style="left:395px;top:629px;width:845px;height:1px;background:#d6d9de"></div>
<div style="left:395px;top:540px;width:845px;height:100px;overflow:hidden">
<div class="t" style="left:51.30px;top:2.76px;font-size:20.28px;line-height:20.28px;color:#1e1e1e;font-weight:bold;font-family:'Liberation Mono', monospace;transform:scaleY(1.05);transform-origin:0 15.54px;">Отдел</div>
<div class="t" style="left:51.30px;top:18.76px;font-size:20.28px;line-height:20.28px;color:#1e1e1e;font-family:'Liberation Mono', monospace;transform:scaleY(1.05);transform-origin:0 15.54px;">character varying (30)</div>
<svg style="position:absolute;left:324px;top:12px;" width="12" height="15" viewBox="0 0 12 15"><path d="M3 7 V4.5 A3 3 0 0 1 9 4.5 V7" fill="none" stroke="#1e1e1e" stroke-width="1.8"/><rect x="0.5" y="6.5" width="11" height="8.5" rx="1.5" fill="#1e1e1e"/><circle cx="6" cy="10.8" r="1.3" fill="#b0b7c3"/></svg>
<div class="t" style="left:350.00px;top:2.76px;font-size:20.28px;line-height:20.28px;color:#1e1e1e;font-weight:bold;font-family:'Liberation Mono', monospace;transform:scaleY(1.05);transform-origin:0 15.54px;">Местоположение</div>
<div class="t" style="left:350.00px;top:18.76px;font-size:20.28px;line-height:20.28px;color:#1e1e1e;font-family:'Liberation Mono', monospace;transform:scaleY(1.05);transform-origin:0 15.54px;">text</div>
<svg style="position:absolute;left:528px;top:12px;" width="12" height="15" viewBox="0 0 12 15"><path d="M3 7 V4.5 A3 3 0 0 1 9 4.5 V7" fill="none" stroke="#1e1e1e" stroke-width="1.8"/><rect x="0.5" y="6.5" width="11" height="8.5" rx="1.5" fill="#1e1e1e"/><circle cx="6" cy="10.8" r="1.3" fill="#b0b7c3"/></svg>
<div class="t" style="left:551.40px;top:2.76px;font-size:20.28px;line-height:20.28px;color:#1e1e1e;font-weight:bold;font-family:'Liberation Mono', monospace;transform:scaleY(1.05);transform-origin:0 15.54px;">Количество сотрудников</div>
<div class="t" style="left:551.40px;top:18.76px;font-size:20.28px;line-height:20.28px;color:#1e1e1e;font-family:'Liberation Mono', monospace;transform:scaleY(1.05);transform-origin:0 15.54px;">bigint</div>
<svg style="position:absolute;left:827px;top:12px;" width="12" height="15" viewBox="0 0 12 15"><path d="M3 7 V4.5 A3 3 0 0 1 9 4.5 V7" fill="none" stroke="#1e1e1e" stroke-width="1.8"/><rect x="0.5" y="6.5" width="11" height="8.5" rx="1.5" fill="#1e1e1e"/><circle cx="6" cy="10.8" r="1.3" fill="#b0b7c3"/></svg>
<div class="t" style="left:8.00px;top:43.96px;font-size:20.28px;line-height:20.28px;color:#1e1e1e;font-family:'Liberation Mono', monospace;transform:scaleY(1.05);transform-origin:0 15.54px;">1</div>
<div class="t" style="left:52.80px;top:43.96px;font-size:20.28px;line-height:20.28px;color:#1e1e1e;font-family:'Liberation Mono', monospace;transform:scaleY(1.05);transform-origin:0 15.54px;">Shipping</div>
<div class="t" style="left:350.00px;top:43.96px;font-size:20.28px;line-height:20.28px;color:#1e1e1e;font-family:'Liberation Mono', monospace;transform:scaleY(1.05);transform-origin:0 15.54px;">[null]</div>
<div class="t" style="left:824.00px;top:43.96px;font-size:20.28px;line-height:20.28px;color:#1e1e1e;font-family:'Liberation Mono', monospace;transform:scaleY(1.05);transform-origin:0 15.54px;">8</div>
<div class="t" style="left:8.00px;top:69.36px;font-size:20.28px;line-height:20.28px;color:#1e1e1e;font-family:'Liberation Mono', monospace;transform:scaleY(1.05);transform-origin:0 15.54px;">2</div>
<div class="t" style="left:52.80px;top:69.36px;font-size:20.28px;line-height:20.28px;color:#1e1e1e;font-family:'Liberation Mono', monospace;transform:scaleY(1.05);transform-origin:0 15.54px;">Marketing</div>
<div class="t" style="left:350.00px;top:69.36px;font-size:20.28px;line-height:20.28px;color:#1e1e1e;font-family:'Liberation Mono', monospace;transform:scaleY(1.05);transform-origin:0 15.54px;">[null]</div>
<div class="t" style="left:824.00px;top:69.36px;font-size:20.28px;line-height:20.28px;color:#1e1e1e;font-family:'Liberation Mono', monospace;transform:scaleY(1.05);transform-origin:0 15.54px;">2</div>
<div class="t" style="left:8.00px;top:94.76px;font-size:20.28px;line-height:20.28px;color:#1e1e1e;font-family:'Liberation Mono', monospace;transform:scaleY(1.05);transform-origin:0 15.54px;">3</div>
<div class="t" style="left:52.80px;top:94.76px;font-size:20.28px;line-height:20.28px;color:#1e1e1e;font-family:'Liberation Mono', monospace;transform:scaleY(1.05);transform-origin:0 15.54px;">Executive</div>
<div class="t" style="left:350.00px;top:94.76px;font-size:20.28px;line-height:20.28px;color:#1e1e1e;font-family:'Liberation Mono', monospace;transform:scaleY(1.05);transform-origin:0 15.54px;">[null]</div>
<div class="t" style="left:824.00px;top:94.76px;font-size:20.28px;line-height:20.28px;color:#1e1e1e;font-family:'Liberation Mono', monospace;transform:scaleY(1.05);transform-origin:0 15.54px;">3</div>
</div>
<div style="left:395px;top:640px;width:883px;height:34px;background:linear-gradient(90deg,#dbdee3,#dcdfe4)"></div>
<div class="t" style="left:407.60px;top:648.96px;font-size:20.28px;line-height:20.28px;color:#222;font-family:'Liberation Mono', monospace;transform:scaleY(1.05);transform-origin:0 15.54px;">Total rows: 3</div>
<div style="left:577px;top:645px;width:1px;height:25px;background:#c6cbd2"></div>
<div class="t" style="left:590.50px;top:648.96px;font-size:20.28px;line-height:20.28px;color:#222;font-family:'Liberation Mono', monospace;transform:scaleY(1.05);transform-origin:0 15.54px;">Query complete 00:00:00.230</div>
<div style="left:931px;top:645px;width:1px;height:25px;background:#c6cbd2"></div>
<div class="t" style="left:1059.00px;top:648.96px;font-size:20.28px;line-height:20.28px;color:#222;font-family:'Liberation Mono', monospace;transform:scaleY(1.05);transform-origin:0 15.54px;">LF</div>
<div style="left:1095px;top:645px;width:1px;height:25px;background:#c6cbd2"></div>
<div class="t" style="left:1108.40px;top:648.96px;font-size:20.28px;line-height:20.28px;color:#222;font-family:'Liberation Mono', monospace;transform:scaleY(1.05);transform-origin:0 15.54px;">Ln 13, Col 1</div>
<div style="left:619px;top:594px;width:639px;height:60px;background:#cadbc9;border:1.2px solid #2f8f3e;border-radius:5px;box-sizing:border-box"></div>
<svg style="position:absolute;left:626px;top:616px;" width="21" height="17" viewBox="0 0 21 17"><path d="M2.5 9 L8 14.5 L18.5 3" fill="none" stroke="#2e8b3c" stroke-width="2.4"/></svg>
<div class="t" style="left:653.00px;top:603.16px;font-size:20.28px;line-height:20.28px;color:#222;font-family:'Liberation Mono', monospace;transform:scaleY(1.05);transform-origin:0 15.54px;">Successfully run. Total query runtime: 230</div>
<div class="t" style="left:653.00px;top:629.36px;font-size:20.28px;line-height:20.28px;color:#222;font-family:'Liberation Mono', monospace;transform:scaleY(1.05);transform-origin:0 15.54px;">msec. 3 rows affected.</div>
<svg style="position:absolute;left:1227px;top:616px;" width="17" height="17" viewBox="0 0 17 17"><path d="M2 2 L15 15 M15 2 L2 15" stroke="#2e8b3c" stroke-width="2.3"/></svg>
</body></html>
